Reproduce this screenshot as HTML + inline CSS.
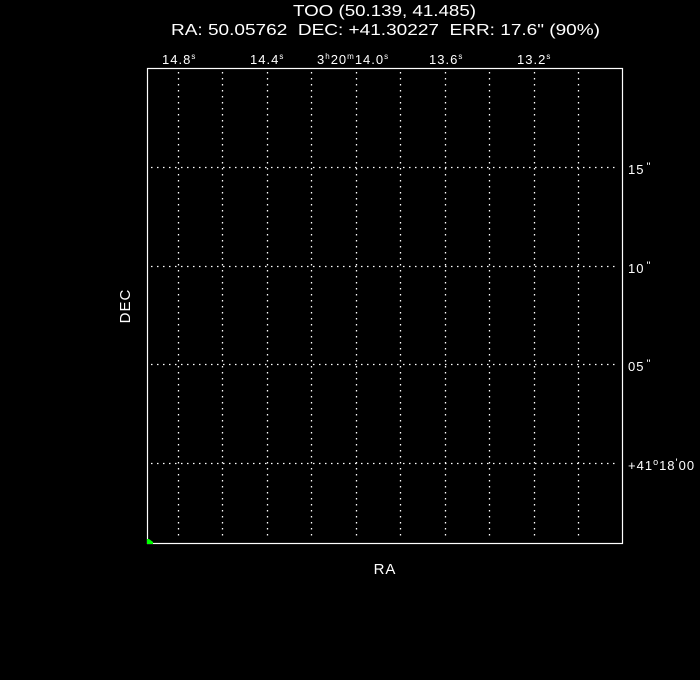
<!DOCTYPE html>
<html><head><style>
html,body{margin:0;padding:0;background:#000;width:700px;height:680px;overflow:hidden}
svg{display:block}
text{font-family:"Liberation Sans",sans-serif;fill:#fff}
</style></head><body>
<svg width="700" height="680" viewBox="0 0 700 680">
<text x="293" y="16" font-size="16" textLength="183" lengthAdjust="spacingAndGlyphs">TOO (50.139, 41.485)</text>
<text x="171" y="35" font-size="16" textLength="429" lengthAdjust="spacingAndGlyphs" xml:space="preserve">RA: 50.05762  DEC: +41.30227  ERR: 17.6" (90%)</text>
<g font-size="13" letter-spacing="1">
<text x="162" y="64">14.8<tspan font-size="8" dy="-5">s</tspan></text>
<text x="250" y="64">14.4<tspan font-size="8" dy="-5">s</tspan></text>
<text x="317" y="64">3<tspan font-size="8" dy="-5">h</tspan><tspan dy="5">20</tspan><tspan font-size="8" dy="-5">m</tspan><tspan dy="5">14.0</tspan><tspan font-size="8" dy="-5">s</tspan></text>
<text x="429" y="64">13.6<tspan font-size="8" dy="-5">s</tspan></text>
<text x="517" y="64">13.2<tspan font-size="8" dy="-5">s</tspan></text>
<text x="628" y="174">15<tspan font-size="11" dy="-4" dx="2">"</tspan></text>
<text x="628" y="273">10<tspan font-size="11" dy="-4" dx="2">"</tspan></text>
<text x="628" y="371">05<tspan font-size="11" dy="-4" dx="2">"</tspan></text>
<text x="628" y="470">+41<tspan font-size="9" dy="-5">o</tspan><tspan dy="5">18</tspan><tspan font-size="11" dy="-4">'</tspan><tspan dy="4">00</tspan></text>
</g>
<text x="385" y="574" font-size="15" text-anchor="middle" letter-spacing="1">RA</text>
<text transform="translate(130,306) rotate(-90)" font-size="15" text-anchor="middle" letter-spacing="1">DEC</text>
<g stroke="#fff" stroke-width="1.3" stroke-dasharray="1.5,4.5">
<line x1="178.5" y1="72" x2="178.5" y2="540"/>
<line x1="222.5" y1="72" x2="222.5" y2="540"/>
<line x1="267.5" y1="72" x2="267.5" y2="540"/>
<line x1="311.5" y1="72" x2="311.5" y2="540"/>
<line x1="356.5" y1="72" x2="356.5" y2="540"/>
<line x1="400.5" y1="72" x2="400.5" y2="540"/>
<line x1="445.5" y1="72" x2="445.5" y2="540"/>
<line x1="489.5" y1="72" x2="489.5" y2="540"/>
<line x1="534.5" y1="72" x2="534.5" y2="540"/>
<line x1="578.5" y1="72" x2="578.5" y2="540"/>
<line x1="151" y1="167.5" x2="619" y2="167.5"/>
<line x1="151" y1="266.5" x2="619" y2="266.5"/>
<line x1="151" y1="364.5" x2="619" y2="364.5"/>
<line x1="151" y1="463.5" x2="619" y2="463.5"/>
</g>
<rect x="147.5" y="68.5" width="475" height="475" fill="none" stroke="#fff" stroke-width="1.2"/>
<path d="M147 539 L149 539 L153 542 L153 544 L147 544Z" fill="#0f0"/>
</svg>
</body></html>
